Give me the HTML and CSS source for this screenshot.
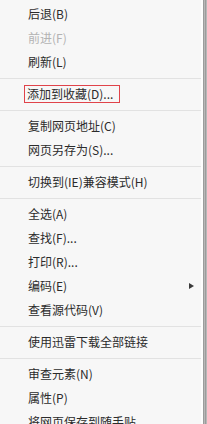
FILE: index.html
```html
<!DOCTYPE html>
<html lang="zh-CN">
<head>
  <meta charset="utf-8">
  <meta name="viewport" content="width=device-width, initial-scale=1.0">
  <title>右键菜单</title>
  <link rel="stylesheet" href="styles.css">
</head>
<body>

  <div class="frame">
    <ul class="menu">
      <li class="item">后退(B)</li>
      <li class="item disabled">前进(F)</li>
      <li class="item">刷新(L)</li>
      <li class="sep"></li>
      <li class="item"><span class="mark">添加到收藏(D)...</span></li>
      <li class="sep"></li>
      <li class="item">复制网页地址(C)</li>
      <li class="item">网页另存为(S)...</li>
      <li class="sep"></li>
      <li class="item">切换到(IE)兼容模式(H)</li>
      <li class="sep"></li>
      <li class="item">全选(A)</li>
      <li class="item">查找(F)...</li>
      <li class="item">打印(R)...</li>
      <li class="item sub">编码(E)</li>
      <li class="item">查看源代码(V)</li>
      <li class="sep"></li>
      <li class="item">使用迅雷下载全部链接</li>
      <li class="sep"></li>
      <li class="item">审查元素(N)</li>
      <li class="item">属性(P)</li>
      <li class="item">将网页保存到随手贴</li>
    </ul>
    <div class="edge"></div>
  </div>

</body>
</html>
```

FILE: styles.css
```css
html, body {
  margin: 0;
  padding: 0;
  height: 100%;
  width: 100%;
  overflow: hidden;
  background-color: #f7f7f7;
  font-family: 'Noto Sans CJK SC', 'Noto Sans', sans-serif;
}

.frame {
  display: flex;
  height: 100%;
}

.menu {
  flex: 1;
  list-style: none;
  margin: 0;
  padding: 2px 0 0 0;
  background: #f7f7f7;
}

.item {
  position: relative;
  height: 24px;
  line-height: 24px;
  padding-left: 28px;
  font-size: 12px;
  color: #2b2b2b;
  white-space: nowrap;
}

.item.disabled {
  color: #b3b3b3;
}

.sub::after {
  content: "";
  position: absolute;
  right: 7px;
  top: 9px;
  border-left: 5px solid #3a3a3a;
  border-top: 3.5px solid transparent;
  border-bottom: 3.5px solid transparent;
}

.sep {
  height: 0;
  margin: 4px 0 3px 0;
  border-top: 1px solid #e2e2e2;
}

.mark {
  display: inline-block;
  line-height: 16px;
  margin-left: -4px;
  padding: 0 6px 0 2px;
  border: 1px solid #e0434a;
}

.edge {
  width: 4px;
  border-left: 2px solid #fdfdfd;
  background: repeating-linear-gradient(90deg, #9c9c9c 0, #9c9c9c 1px, #b8b8b8 1px, #b8b8b8 2px);
}
```
